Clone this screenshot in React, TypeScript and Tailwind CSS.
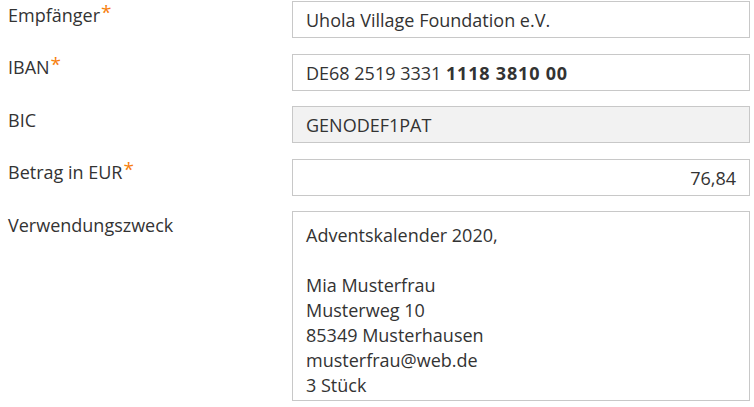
const labelCls = 'w-[292px] shrink-0 pl-2 pt-[1.5px] text-[18px] leading-[25px] text-[#333333]';
const boxCls = 'w-[458px] h-[37px] border border-[#c8c8c8] px-[13px] pt-[2px] flex items-center text-[18px] text-[#333333]';

function Label({ text, required = false }: { text: string; required?: boolean }) {
  return (
    <div className={labelCls}>
      {text}
      {required && <span className="ml-[1px] align-top text-[19px] leading-none text-[#f7800e]">*</span>}
    </div>
  );
}

const purpose = [
  'Adventskalender 2020,',
  '',
  'Mia Musterfrau',
  'Musterweg 10',
  '85349 Musterhausen',
  'musterfrau@web.de',
  '3 Stück',
];

export default function App() {
  return (
    <div
      className="w-[754px] h-[407px] bg-white pt-[1px] flex flex-col gap-[15.5px]"
      style={{ fontFamily: '"Open Sans", "Noto Sans", sans-serif' }}
    >
      <div className="flex items-start">
        <Label text="Empfänger" required />
        <div className={boxCls}>Uhola Village Foundation e.V.</div>
      </div>

      <div className="flex items-start">
        <Label text="IBAN" required />
        <div className={boxCls}>
          DE68 2519 3331&nbsp;<span className="font-bold tracking-[0.8px]">1118 3810 00</span>
        </div>
      </div>

      <div className="flex items-start">
        <Label text="BIC" />
        <div className={`${boxCls} bg-[#f2f2f2]`}>GENODEF1PAT</div>
      </div>

      <div className="flex items-start">
        <Label text="Betrag in EUR" required />
        <div className={`${boxCls} justify-end`}>76,84</div>
      </div>

      <div className="flex items-start">
        <Label text="Verwendungszweck" />
        <div className="w-[458px] h-[190px] border border-[#c8c8c8] px-[13px] pt-[11px] text-[18px] leading-[25px] text-[#333333]">
          {purpose.map((line, i) => (
            <div key={i} className="h-[25px]">
              {line}
            </div>
          ))}
        </div>
      </div>
    </div>
  );
}
